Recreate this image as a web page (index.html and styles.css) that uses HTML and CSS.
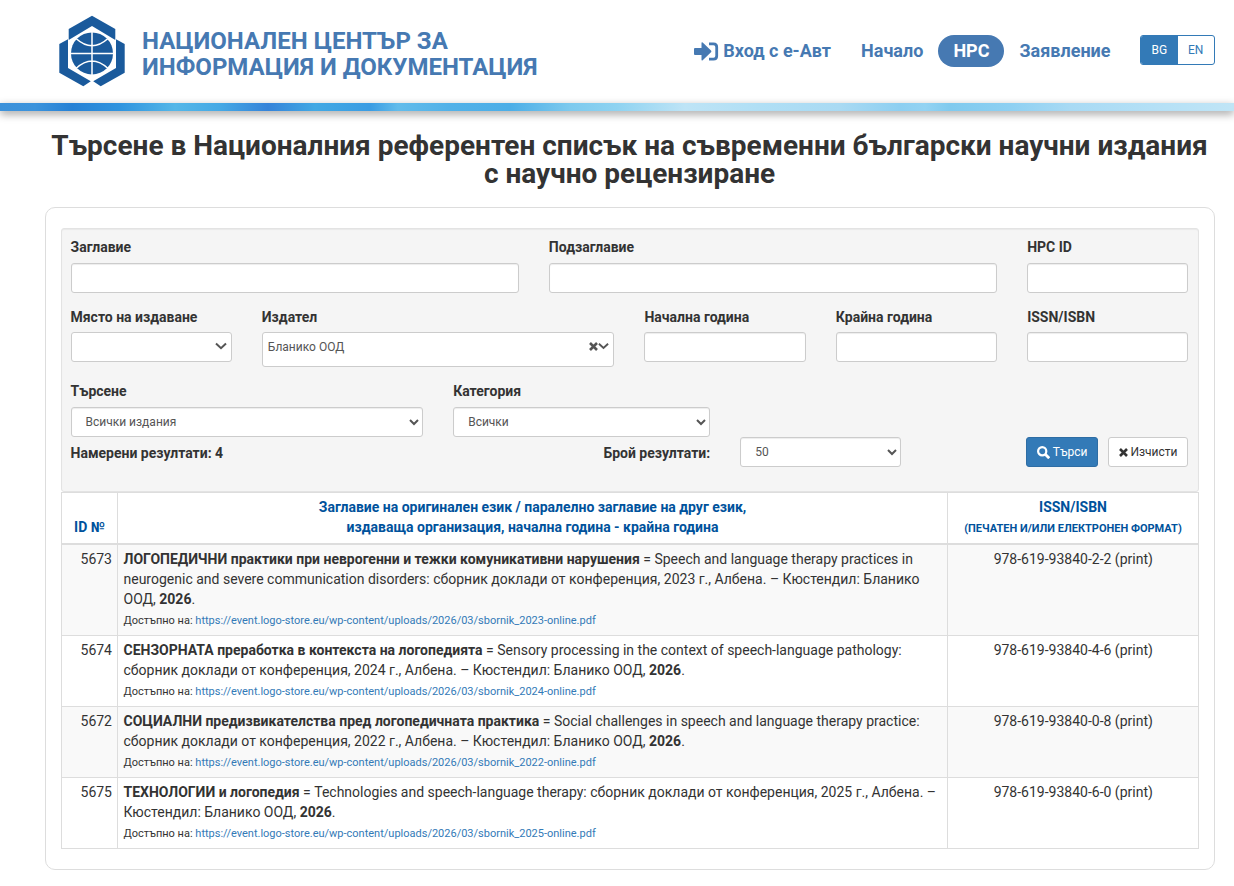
FILE: index.html
```html
<!DOCTYPE html>
<html lang="bg">

<head>
    <meta charset="UTF-8">
    <meta name="viewport" content="width=device-width, initial-scale=1.0">
    <title>Национален референтен списък</title>
    <link rel="stylesheet" href="styles.css">
</head>

<body>
    <header class="header">
        <div class="container header-inner">
            <a class="brand">
                <svg class="logo" width="68" height="72" viewBox="0 0 68 72">
                    <g fill="#1a5a9c">
                        <path d="M34 .7L57.300 14V25L34 11L10.700 25V14Z" />
                        <path d="M1.300 29L10 24.300V53L32.800 66.300L25.300 71.200L1.300 57.700Z" />
                        <path d="M66.700 29L58 24.300V53L35.200 66.300L42.700 71.200L66.700 57.700Z" />
                        <circle cx="34" cy="38.400" r="21" />
                    </g>
                    <g fill="none" stroke="#fff" stroke-width="1.500">
                        <path d="M34 16V61M12 38.400H56M18 23.500Q34 38 50 23.500M18 53.500Q34 38.500 50 53.500" />
                    </g>
                </svg>
                <span class="brand-name">НАЦИОНАЛЕН ЦЕНТЪР ЗА<br>ИНФОРМАЦИЯ И ДОКУМЕНТАЦИЯ</span>
            </a>
            <nav class="nav">
                <a class="nav-item login">
                    <svg width="25" height="19" viewBox="0 0 25 19">
                        <path fill="currentColor" d="M1 6h6.500V1.200q0-1.500 1.200-.6l8.300 8q.7.800 0 1.600L8.700 18.200q-1.200.9-1.200-.6V13H1q-1 0-1-1V7q0-1 1-1z" />
                        <path fill="none" stroke="currentColor" stroke-width="2.800" d="M15 1.800h4.500q3.200 0 3.200 3.200v9q0 3.200-3.200 3.200H15" />
                    </svg>
                    Вход с е-Авт
                </a>
                <a class="nav-item">Начало</a>
                <a class="nav-item active">НРС</a>
                <a class="nav-item">Заявление</a>
            </nav>
            <div class="lang">
                <a class="lang-btn current">BG</a>
                <a class="lang-btn">EN</a>
            </div>
        </div>
    </header>
    <div class="stripe"></div>

    <main class="container">
        <h1 class="page-title">Търсене в Националния референтен списък на съвременни български научни издания с научно рецензиране</h1>

        <div class="panel">
            <form class="well">
                <div class="row">
                    <div class="col-5">
                        <label>Заглавие</label>
                        <input type="text" class="form-control">
                    </div>
                    <div class="col-5">
                        <label>Подзаглавие</label>
                        <input type="text" class="form-control">
                    </div>
                    <div class="col-2">
                        <label>НРС ID</label>
                        <input type="text" class="form-control">
                    </div>
                </div>

                <div class="row second">
                    <div class="col-2">
                        <label>Място на издаване</label>
                        <div class="form-control picker">
                            <svg class="chevron" width="12" height="8" viewBox="0 0 12 8"><path d="M1 1.500L6 6.200L11 1.500" /></svg>
                        </div>
                    </div>
                    <div class="col-4">
                        <label>Издател</label>
                        <div class="form-control picker tall">
                            <span>Бланико ООД</span>
                            <svg class="cross" width="9" height="9" viewBox="0 0 9 9"><path d="M1 1L8 8M8 1L1 8" /></svg>
                            <svg class="chevron small" width="11" height="8" viewBox="0 0 12 8"><path d="M1 1.500L6 6.200L11 1.500" /></svg>
                        </div>
                    </div>
                    <div class="col-2">
                        <label>Начална година</label>
                        <input type="text" class="form-control">
                    </div>
                    <div class="col-2">
                        <label>Крайна година</label>
                        <input type="text" class="form-control">
                    </div>
                    <div class="col-2">
                        <label>ISSN/ISBN</label>
                        <input type="text" class="form-control">
                    </div>
                </div>

                <div class="row third">
                    <div class="col-4">
                        <label>Търсене</label>
                        <select class="form-control"><option>Всички издания</option></select>
                    </div>
                    <div class="col-3">
                        <label>Категория</label>
                        <select class="form-control"><option>Всички</option></select>
                    </div>
                </div>

                <div class="row">
                    <div class="col-4"><span class="result-label">Намерени резултати: 4</span></div>
                    <div class="col-3"><span class="result-label right">Брой резултати:</span></div>
                    <div class="col-2">
                        <select class="form-control"><option>50</option></select>
                    </div>
                    <div class="col-3 buttons">
                        <button type="button" class="btn btn-primary">
                            <svg width="13" height="13" viewBox="0 0 13 13"><circle cx="5.200" cy="5.200" r="4.100" fill="none" stroke="currentColor" stroke-width="2.200" /><path d="M8 8L12.200 12.200" stroke="currentColor" stroke-width="2.800" /></svg>
                            Търси
                        </button>
                        <button type="button" class="btn">
                            <svg class="cross" width="9" height="9" viewBox="0 0 9 9"><path d="M1 1L8 8M8 1L1 8" /></svg>
                            Изчисти
                        </button>
                    </div>
                </div>
            </form>

            <table class="results">
                <thead>
                    <tr>
                        <th class="col-id">ID №</th>
                        <th>Заглавие на оригинален език / паралелно заглавие на друг език,<br>издаваща организация, начална година - крайна година</th>
                        <th class="col-isbn">ISSN/ISBN<br><small>(ПЕЧАТЕН И/ИЛИ ЕЛЕКТРОНЕН ФОРМАТ)</small></th>
                    </tr>
                </thead>
                <tbody>
                    <tr>
                        <td class="id">5673</td>
                        <td><b>ЛОГОПЕДИЧНИ практики при неврогенни и тежки комуникативни нарушения</b> = Speech and language therapy practices in neurogenic and severe communication disorders: сборник доклади от конференция, 2023 г., Албена. – Кюстендил: Бланико ООД, <b>2026</b>.
                            <div class="link">Достъпно на: <a>https://event.logo-store.eu/wp-content/uploads/2026/03/sbornik_2023-online.pdf</a></div></td>
                        <td class="isbn">978-619-93840-2-2 (print)</td>
                    </tr>
                    <tr>
                        <td class="id">5674</td>
                        <td><b>СЕНЗОРНАТА преработка в контекста на логопедията</b> = Sensory processing in the context of speech-language pathology: сборник доклади от конференция, 2024 г., Албена. – Кюстендил: Бланико ООД, <b>2026</b>.
                            <div class="link">Достъпно на: <a>https://event.logo-store.eu/wp-content/uploads/2026/03/sbornik_2024-online.pdf</a></div></td>
                        <td class="isbn">978-619-93840-4-6 (print)</td>
                    </tr>
                    <tr>
                        <td class="id">5672</td>
                        <td><b>СОЦИАЛНИ предизвикателства пред логопедичната практика</b> = Social challenges in speech and language therapy practice: сборник доклади от конференция, 2022 г., Албена. – Кюстендил: Бланико ООД, <b>2026</b>.
                            <div class="link">Достъпно на: <a>https://event.logo-store.eu/wp-content/uploads/2026/03/sbornik_2022-online.pdf</a></div></td>
                        <td class="isbn">978-619-93840-0-8 (print)</td>
                    </tr>
                    <tr>
                        <td class="id">5675</td>
                        <td><b>ТЕХНОЛОГИИ и логопедия</b> = Technologies and speech-language therapy: сборник доклади от конференция, 2025 г., Албена. – Кюстендил: Бланико ООД, <b>2026</b>.
                            <div class="link">Достъпно на: <a>https://event.logo-store.eu/wp-content/uploads/2026/03/sbornik_2025-online.pdf</a></div></td>
                        <td class="isbn">978-619-93840-6-0 (print)</td>
                    </tr>
                </tbody>
            </table>
        </div>
    </main>
</body>

</html>
```
FILE: styles.css
```css
:root {
    --blue: #4679b2;
    --primary: #337ab7;
    --line: #ddd;
}

* {
    box-sizing: border-box;
}

body {
    margin: 0;
    font-family: Roboto, "Liberation Sans", sans-serif;
    font-size: 14px;
    line-height: 20px;
    color: #333;
    background-color: #fff;
    overflow: hidden;
}

.container {
    width: 1170px;
    margin-left: 45px;
}

/* header */
.header-inner {
    height: 103px;
    display: flex;
    align-items: flex-start;
}

.brand {
    display: flex;
    padding: 15px 0 0 13px;
    margin-right: auto;
}

.brand-name {
    margin: 13px 0 0 16px;
    font-size: 24px;
    line-height: 26px;
    font-weight: 700;
    color: var(--blue);
    white-space: nowrap;
}

.nav {
    display: flex;
    margin-top: 35px;
}

.nav-item {
    height: 32px;
    padding: 0 15px;
    border-radius: 16px;
    font-size: 18px;
    line-height: 32px;
    font-weight: 700;
    color: var(--blue);
    white-space: nowrap;
}

.nav-item.active {
    background-color: var(--blue);
    color: #fff;
}

.login {
    display: flex;
    align-items: center;
    gap: 4px;
}

.lang {
    display: flex;
    margin: 35px 0 0 14.5px;
    width: 75px;
    height: 30px;
    border: 1px solid var(--primary);
    border-radius: 3px;
    overflow: hidden;
}

.lang-btn {
    flex: 1;
    text-align: center;
    font-size: 12px;
    line-height: 28px;
    color: var(--primary);
}

.lang-btn.current {
    background-color: var(--primary);
    color: #fff;
}

.stripe {
    height: 8px;
    background: linear-gradient(90deg, #3c91da 0, #3b93dc 35px, #2681d5 72px, #2f94df 120px, #54b7e8 175px, #45a9e5 220px, #3583d9 268px, #42a9e4 315px, #3a9ce3 370px, #62bceb 398px, #51b1e8 450px, #4caee7 510px, #7dcaee 570px, #8fd3f1 617px, #bee4f6 685px, #b0dff5 760px, #a9daf3 840px, #8dcff1 900px, #93d3f3 925px, #80caee 950px, #8ed0f2 1010px, #a8daf4 1070px, #b4e0f6 1150px, #c0e5f6 1234px);
    box-shadow: 0 3px 9px rgba(0, 0, 0, 0.38);
}

.page-title {
    margin: 21px 0 19px;
    padding-right: 1px;
    font-size: 28px;
    line-height: 28px;
    font-weight: 700;
    text-align: center;
}

/* search form */
.panel {
    border: 1px solid var(--line);
    border-radius: 10px;
    padding: 20px 15px;
}

.well {
    height: 264px;
    padding: 9px 9.5px 9px 8.5px;
    background-color: #f5f5f5;
    border: 1px solid #e3e3e3;
    border-radius: 3px;
    box-shadow: inset 0 1px 1px rgba(0, 0, 0, 0.05);
}

.row {
    display: flex;
    margin: 0 -15px;
}

.row.second {
    margin-top: 15px;
}

.row.third {
    margin-top: 15px;
}

.col-2,
.col-3,
.col-4,
.col-5 {
    flex: none;
    padding: 0 15px;
}

.col-2 {
    width: 16.6667%;
}

.col-3 {
    width: 25%;
}

.col-4 {
    width: 33.3333%;
}

.col-5 {
    width: 41.6667%;
}

label {
    display: block;
    margin-bottom: 7px;
    line-height: 18px;
    font-weight: 700;
}

.second label {
    margin-bottom: 6px;
}

.form-control {
    display: block;
    width: 100%;
    height: 30px;
    padding: 5px 10px;
    font-family: inherit;
    font-size: 12px;
    line-height: 18px;
    color: #555;
    background-color: #fff;
    border: 1px solid #ccc;
    border-radius: 3px;
    box-shadow: inset 0 1px 1px rgba(0, 0, 0, 0.075);
}

.form-control.picker {
    display: flex;
    justify-content: flex-end;
    padding: 5px 4px 5px 5px;
    box-shadow: none;
}

.form-control.tall {
    height: 35px;
}

.picker span {
    margin-right: auto;
}

.chevron,
.cross {
    fill: none;
    stroke: currentColor;
    stroke-width: 2;
}

.picker svg {
    margin-top: 4px;
}

.cross {
    stroke-width: 2.6;
}

.result-label {
    display: block;
    padding-top: 6px;
    font-weight: 700;
}

.right {
    text-align: right;
}

.buttons {
    display: flex;
    justify-content: flex-end;
    gap: 10px;
}

.btn {
    display: flex;
    align-items: center;
    gap: 2px;
    height: 30px;
    padding: 0 10px;
    font-family: inherit;
    font-size: 12px;
    color: #333;
    background-color: #fff;
    border: 1px solid #ccc;
    border-radius: 3px;
}

.btn-primary {
    gap: 3px;
    color: #fff;
    background-color: var(--primary);
    border-color: #2e6da4;
}

/* results */
.results {
    width: 100%;
    table-layout: fixed;
    border-collapse: collapse;
}

.results th,
.results td {
    padding: 4px 5px 4px 5.5px;
    border: 1px solid var(--line);
    vertical-align: top;
}

.results th {
    padding: 4px 5px 6px;
    border-bottom-width: 2px;
    vertical-align: bottom;
    color: #00529c;
}

.results small {
    font-size: 11px;
    line-height: 1;
}

.results tbody tr:nth-child(odd) {
    background-color: #f9f9f9;
}

.col-id {
    width: 56px;
}

.col-isbn {
    width: 251px;
}

.id {
    text-align: right;
}

.isbn {
    text-align: center;
}

.link {
    padding-top: 2px;
    font-size: 11px;
}

.link a {
    color: var(--primary);
}
```
